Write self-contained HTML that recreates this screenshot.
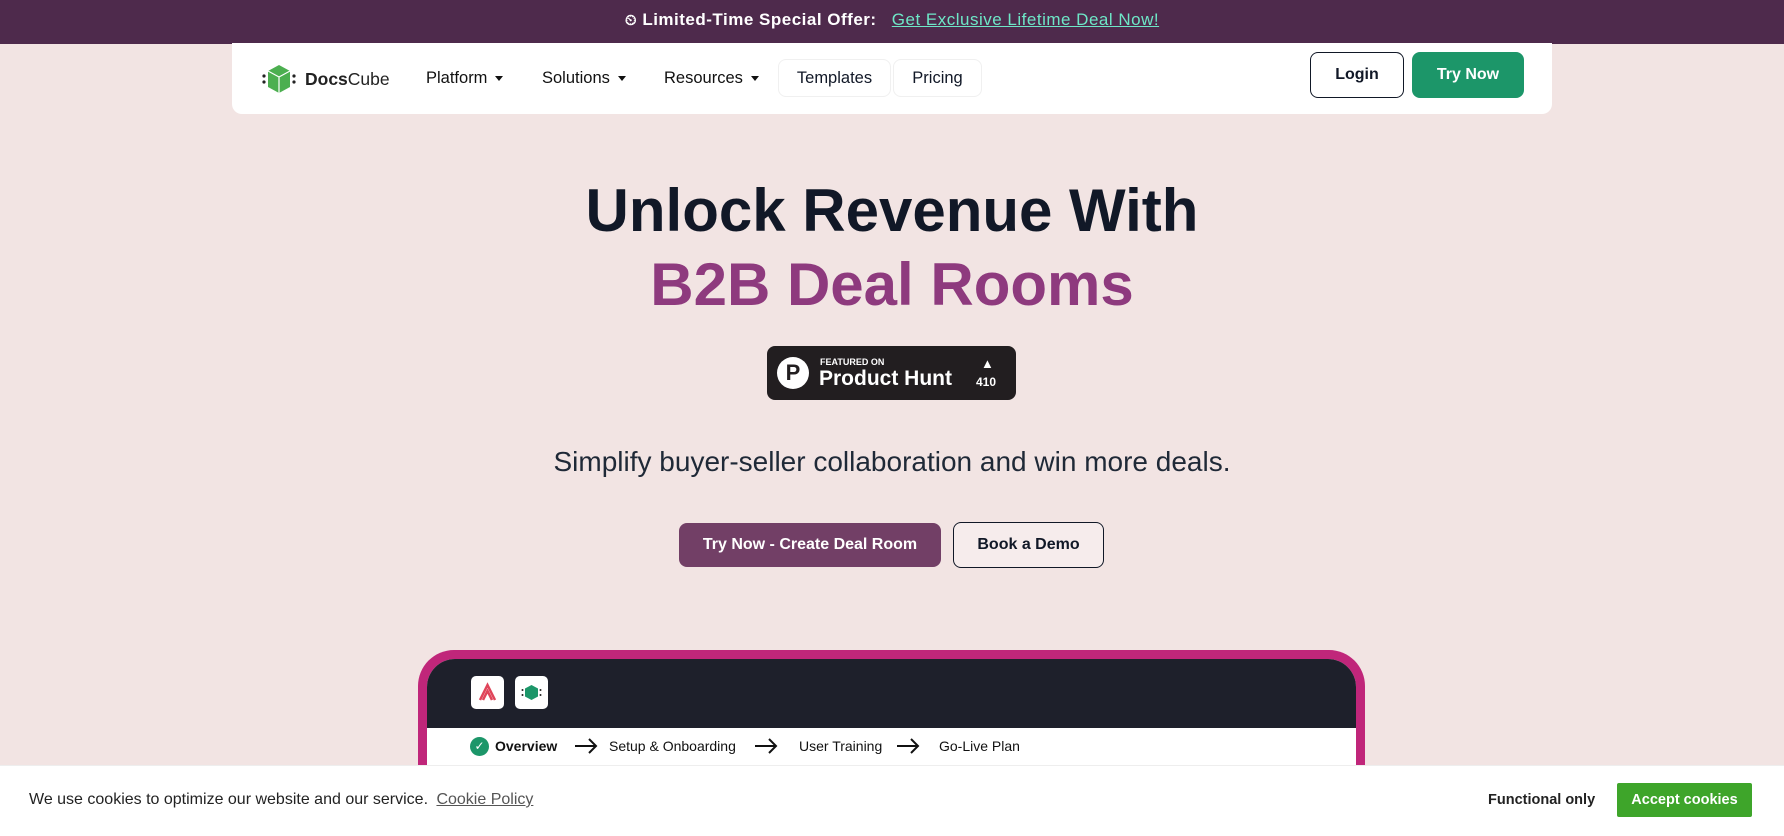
<!DOCTYPE html>
<html><head><meta charset="utf-8"><style>
*{box-sizing:border-box;margin:0;padding:0}
html,body{width:1784px;height:836px;overflow:hidden}
body{background:#f2e4e3;font-family:"Liberation Sans",sans-serif;position:relative;color:#111827}
.a{position:absolute}
.banner{left:0;top:0;width:1784px;height:44px;background:#4e2a4c;color:#fff;font-size:17px;font-weight:bold;text-align:center;line-height:40px;letter-spacing:.5px}
.banner a{color:#6ee7c7;font-weight:normal;text-decoration:underline;margin-left:10px}
.nav{left:232px;top:43px;width:1320px;height:71px;background:#fff;border-radius:0 0 10px 10px}
.ni{font-size:16.5px;color:#111;top:69px}
.box{border:1px solid #f0f0f0;border-radius:8px;height:38px;top:59px;font-size:16.5px;line-height:36px;text-align:center}
.caret{display:inline-block;border-left:4px solid transparent;border-right:4px solid transparent;border-top:5px solid #111;margin-left:8px;vertical-align:middle}
h1{font-size:60px;font-weight:bold;text-align:center;width:1784px;left:0}
.btn{border-radius:8px;font-size:16px;font-weight:bold;text-align:center}
.st{top:737px;font-size:14px;color:#111;white-space:nowrap;line-height:18px}
.ar{top:737px}
</style></head><body>
<div class="a banner"><span style="font-size:15px">⏲</span> Limited-Time Special Offer: <a>Get Exclusive Lifetime Deal Now!</a></div>
<div class="a nav"></div>
<svg class="a" style="left:262px;top:63px" width="34" height="32" viewBox="0 0 34 32"><circle cx="2" cy="13" r="1.6" fill="#222"/><circle cx="2" cy="19" r="1.6" fill="#222"/><path d="M17 2 L28 8 L28 24 L17 30 L6 24 L6 8Z" fill="#4caf50"/><path d="M6 8 L17 14 L28 8 M17 14 L17 30" stroke="#fff" stroke-width="1.2" fill="none"/><circle cx="32" cy="13" r="1.6" fill="#222"/><circle cx="32" cy="19" r="1.6" fill="#222"/></svg>
<div class="a" style="left:305px;top:69px;font-size:17.5px;color:#222"><b>Docs</b>Cube</div>
<div class="a ni" style="left:426px">Platform<span class="caret"></span></div>
<div class="a ni" style="left:542px">Solutions<span class="caret"></span></div>
<div class="a ni" style="left:664px">Resources<span class="caret"></span></div>
<div class="a box" style="left:778px;width:113px">Templates</div>
<div class="a box" style="left:893px;width:89px">Pricing</div>
<div class="a btn" style="left:1310px;top:52px;width:94px;height:46px;border:1px solid #111827;line-height:44px;background:#fff">Login</div>
<div class="a btn" style="left:1412px;top:52px;width:112px;height:46px;background:#1c9669;color:#fff;line-height:46px">Try Now</div>
<h1 class="a" style="top:176px">Unlock Revenue With</h1>
<h1 class="a" style="top:250px;color:#8e3a7e">B2B Deal Rooms</h1>
<div class="a" style="left:767px;top:346px;width:249px;height:54px;background:#221e20;border-radius:8px;color:#fff">
<div class="a" style="left:10px;top:11px;width:32px;height:32px;border-radius:50%;background:#fff;color:#221e20;font-weight:bold;font-size:22px;text-align:center;line-height:32px">P</div>
<div class="a" style="left:53px;top:11px;font-size:9px;font-weight:bold">FEATURED ON</div>
<div class="a" style="left:52px;top:21px;font-size:21px;font-weight:bold">Product Hunt</div>
<div class="a" style="left:214px;top:10px;font-size:13px">▲</div>
<div class="a" style="left:209px;top:29px;font-size:12px;font-weight:bold">410</div>
</div>
<div class="a" style="left:0;width:1784px;text-align:center;top:446px;font-size:28px;color:#1f2937">Simplify buyer-seller collaboration and win more deals.</div>
<div class="a btn" style="left:679px;top:523px;width:262px;height:44px;background:#723f66;color:#fff;line-height:44px">Try Now - Create Deal Room</div>
<div class="a btn" style="left:953px;top:522px;width:151px;height:46px;border:1px solid #111827;line-height:44px;background:#f6ecec">Book a Demo</div>
<div class="a" style="left:418px;top:650px;width:947px;height:186px;background:#c0267a;border-radius:36px 36px 0 0"></div>
<div class="a" style="left:427px;top:659px;width:929px;height:177px;background:#fff;border-radius:28px 28px 0 0;overflow:hidden"><div style="height:69px;background:#1e202b"></div></div>
<div class="a" style="left:471px;top:676px;width:33px;height:33px;background:#fff;border-radius:5px"><svg width="33" height="33"><path d="M9 24 L16.5 9 L24 24 M12 24 L16.5 15 L21 24" stroke="#e0455a" stroke-width="2.5" fill="none"/></svg></div>
<div class="a" style="left:515px;top:676px;width:33px;height:33px;background:#fff;border-radius:5px"><svg width="33" height="33"><path d="M16.5 9 L23 12.5 L23 20.5 L16.5 24 L10 20.5 L10 12.5Z" fill="#1c9669"/><circle cx="7.5" cy="14" r="1" fill="#222"/><circle cx="7.5" cy="19" r="1" fill="#222"/><circle cx="25.5" cy="14" r="1" fill="#222"/><circle cx="25.5" cy="19" r="1" fill="#222"/></svg></div>
<div class="a" style="left:470px;top:737px;width:19px;height:19px;border-radius:50%;background:#1c9669;color:#fff;text-align:center;font-size:12px;line-height:19px">✓</div>
<div class="a st" style="left:495px"><b>Overview</b></div>
<svg class="a ar" style="left:574px" width="24" height="18"><path d="M1 9 H22 M15 2 L22 9 L15 16" stroke="#111" stroke-width="2" fill="none"/></svg>
<div class="a st" style="left:609px">Setup &amp; Onboarding</div>
<svg class="a ar" style="left:754px" width="24" height="18"><path d="M1 9 H22 M15 2 L22 9 L15 16" stroke="#111" stroke-width="2" fill="none"/></svg>
<div class="a st" style="left:799px">User Training</div>
<svg class="a ar" style="left:896px" width="24" height="18"><path d="M1 9 H22 M15 2 L22 9 L15 16" stroke="#111" stroke-width="2" fill="none"/></svg>
<div class="a st" style="left:939px">Go-Live Plan</div>
<div class="a" style="left:0;top:765px;width:1784px;height:71px;background:#fff;border-top:1px solid #eee"></div>
<div class="a" style="left:29px;top:791px;font-size:16px;color:#222">We use cookies to optimize our website and our service. <span style="color:#555;text-decoration:underline;margin-left:4px">Cookie Policy</span></div>
<div class="a" style="left:1488px;top:792px;font-size:14.5px;font-weight:bold;color:#222">Functional only</div>
<div class="a" style="left:1617px;top:783px;width:135px;height:34px;background:#3ea52a;color:#fff;font-size:14.5px;font-weight:bold;text-align:center;line-height:34px;border-radius:2px">Accept cookies</div>
</body></html>
